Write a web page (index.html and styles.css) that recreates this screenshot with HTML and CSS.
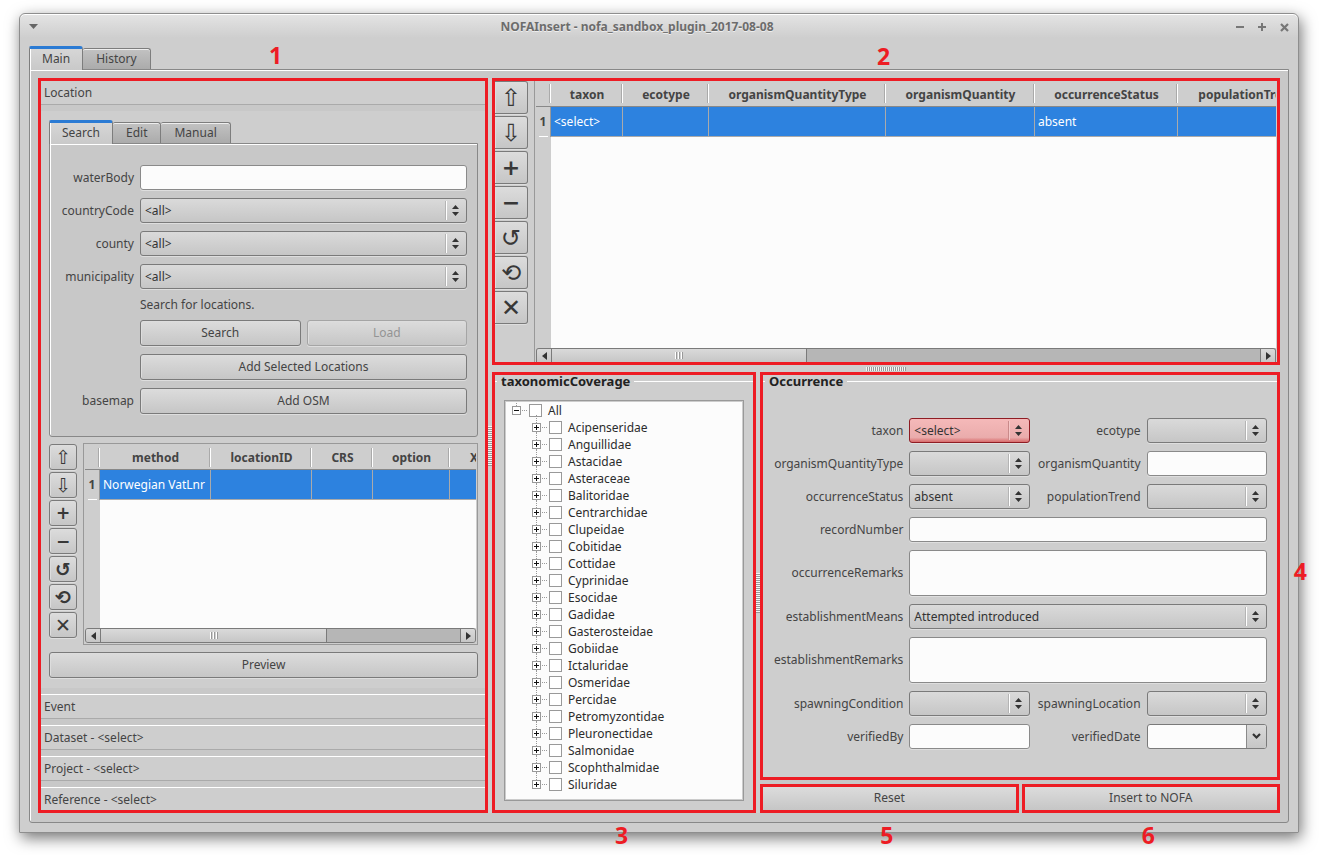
FILE: index.html
```html
<!DOCTYPE html>
<html lang="en">
<head>
<meta charset="utf-8">
<title>NOFAInsert - nofa_sandbox_plugin_2017-08-08</title>
<link rel="stylesheet" href="styles.css">
</head>
<body>
<svg class="defs" aria-hidden="true">
  <symbol id="updown" viewBox="0 0 7 11"><path d="M3.5 0 L7 4 H0 Z M0 7 H7 L3.5 11 Z" fill="#333"/></symbol>
  <symbol id="left" viewBox="0 0 5 8"><path d="M5 0 V8 L0 4 Z" fill="#333"/></symbol>
  <symbol id="right" viewBox="0 0 5 8"><path d="M0 0 V8 L5 4 Z" fill="#333"/></symbol>
</svg>
<main class="window">
  <header class="titlebar">
    <button class="wbtn" aria-label="Window menu"><svg width="9" height="6" viewBox="0 0 9 6"><path d="M0 0H9L4.500 5Z" fill="#666"/></svg></button>
    <h1>NOFAInsert - nofa_sandbox_plugin_2017-08-08</h1>
    <div class="wbtns">
      <button class="wbtn" aria-label="Minimize"><svg width="9" height="9" viewBox="0 0 9 9"><path d="M0 4H8" stroke="#777" stroke-width="2"/></svg></button>
      <button class="wbtn" aria-label="Maximize"><svg width="9" height="9" viewBox="0 0 9 9"><path d="M0 4H8M4 0V8" stroke="#777" stroke-width="2"/></svg></button>
      <button class="wbtn" aria-label="Close"><svg width="9" height="9" viewBox="0 0 9 9"><path d="M1 1L8 8M8 1L1 8" stroke="#777" stroke-width="2.200"/></svg></button>
    </div>
  </header>
  <nav class="tabs main-tabs">
    <button class="tab active">Main</button><button class="tab">History</button>
  </nav>
  <div class="page">
    <section class="mark location">
      <b class="num num1">1</b>
      <h2 class="fold first">Location</h2>
      <div class="fold-body">
        <nav class="tabs">
          <button class="tab active">Search</button><button class="tab">Edit</button><button class="tab">Manual</button>
        </nav>
        <form class="pane search-form">
          <label for="wb">waterBody</label><input id="wb" class="field" type="text">
          <label for="cc">countryCode</label><span class="combo"><select id="cc"><option>&lt;all&gt;</option></select><svg><use href="#updown"/></svg></span>
          <label for="co">county</label><span class="combo"><select id="co"><option>&lt;all&gt;</option></select><svg><use href="#updown"/></svg></span>
          <label for="mu">municipality</label><span class="combo"><select id="mu"><option>&lt;all&gt;</option></select><svg><use href="#updown"/></svg></span>
          <p class="second">Search for locations.</p>
          <div class="second pair"><button type="button" class="btn">Search</button><button type="button" class="btn" disabled>Load</button></div>
          <button type="button" class="btn second">Add Selected Locations</button>
          <label for="osm">basemap</label><button type="button" class="btn" id="osm">Add OSM</button>
        </form>
        <div class="grid-area">
          <div class="tools small">
            <button class="btn" aria-label="Move up">⇧</button>
            <button class="btn" aria-label="Move down">⇩</button>
            <button class="btn heavy sign" aria-label="Add">+</button>
            <button class="btn heavy sign" aria-label="Remove">−</button>
            <button class="btn heavy" aria-label="Reset row">↺</button>
            <button class="btn heavy" aria-label="Reset all rows">⟲</button>
            <button class="btn" aria-label="Delete all">✕</button>
          </div>
          <div class="frame">
            <div class="viewport">
              <table>
                <colgroup><col class="c15"><col class="c111"><col class="c101"><col class="c61"><col class="c77"><col class="c48"></colgroup>
                <thead><tr><th></th><th>method</th><th>locationID</th><th>CRS</th><th>option</th><th>X</th></tr></thead>
                <tbody><tr><th>1</th><td>Norwegian VatLnr</td><td></td><td></td><td></td><td></td></tr></tbody>
              </table>
            </div>
            <div class="scroll">
              <button aria-label="Scroll left"><svg><use href="#left"/></svg></button>
              <div class="trough"><div class="thumb" style="width:63%"><i></i></div></div>
              <button aria-label="Scroll right"><svg><use href="#right"/></svg></button>
            </div>
          </div>
        </div>
        <button class="btn preview">Preview</button>
      </div>
      <h2 class="fold">Event</h2>
      <h2 class="fold">Dataset - &lt;select&gt;</h2>
      <h2 class="fold">Project - &lt;select&gt;</h2>
      <h2 class="fold last">Reference - &lt;select&gt;</h2>
    </section>
    <div class="handle vertical"></div>
    <div class="right">
      <section class="mark occ-table">
        <b class="num num2">2</b>
        <div class="tools large">
          <button class="btn" aria-label="Move up">⇧</button>
          <button class="btn" aria-label="Move down">⇩</button>
          <button class="btn heavy sign" aria-label="Add">+</button>
          <button class="btn heavy sign" aria-label="Remove">−</button>
          <button class="btn" aria-label="Reset row">↺</button>
          <button class="btn" aria-label="Reset all rows">⟲</button>
          <button class="btn" aria-label="Delete all">✕</button>
        </div>
        <div class="frame">
          <div class="viewport">
            <table>
              <colgroup><col class="c15"><col class="c72"><col class="c86"><col class="c177"><col class="c149"><col class="c143"><col class="c140"></colgroup>
              <thead><tr><th></th><th>taxon</th><th>ecotype</th><th>organismQuantityType</th><th>organismQuantity</th><th>occurrenceStatus</th><th>populationTrend</th></tr></thead>
              <tbody><tr><th>1</th><td>&lt;select&gt;</td><td></td><td></td><td></td><td>absent</td><td></td></tr></tbody>
            </table>
          </div>
          <div class="scroll">
            <button aria-label="Scroll left"><svg><use href="#left"/></svg></button>
            <div class="trough"><div class="thumb" style="width:36%"><i></i></div></div>
            <button aria-label="Scroll right"><svg><use href="#right"/></svg></button>
          </div>
        </div>
      </section>
      <div class="handle horizontal"></div>
      <div class="bottom">
        <section class="mark coverage">
          <b class="num num3">3</b>
          <h2 class="group">taxonomicCoverage</h2>
          <div class="tree">
            <div class="node root"><button class="exp open" aria-label="Collapse"></button><label><input type="checkbox">All</label></div>
            <ul>
              <li class="node"><button class="exp" aria-label="Expand"></button><label><input type="checkbox">Acipenseridae</label></li>
              <li class="node"><button class="exp" aria-label="Expand"></button><label><input type="checkbox">Anguillidae</label></li>
              <li class="node"><button class="exp" aria-label="Expand"></button><label><input type="checkbox">Astacidae</label></li>
              <li class="node"><button class="exp" aria-label="Expand"></button><label><input type="checkbox">Asteraceae</label></li>
              <li class="node"><button class="exp" aria-label="Expand"></button><label><input type="checkbox">Balitoridae</label></li>
              <li class="node"><button class="exp" aria-label="Expand"></button><label><input type="checkbox">Centrarchidae</label></li>
              <li class="node"><button class="exp" aria-label="Expand"></button><label><input type="checkbox">Clupeidae</label></li>
              <li class="node"><button class="exp" aria-label="Expand"></button><label><input type="checkbox">Cobitidae</label></li>
              <li class="node"><button class="exp" aria-label="Expand"></button><label><input type="checkbox">Cottidae</label></li>
              <li class="node"><button class="exp" aria-label="Expand"></button><label><input type="checkbox">Cyprinidae</label></li>
              <li class="node"><button class="exp" aria-label="Expand"></button><label><input type="checkbox">Esocidae</label></li>
              <li class="node"><button class="exp" aria-label="Expand"></button><label><input type="checkbox">Gadidae</label></li>
              <li class="node"><button class="exp" aria-label="Expand"></button><label><input type="checkbox">Gasterosteidae</label></li>
              <li class="node"><button class="exp" aria-label="Expand"></button><label><input type="checkbox">Gobiidae</label></li>
              <li class="node"><button class="exp" aria-label="Expand"></button><label><input type="checkbox">Ictaluridae</label></li>
              <li class="node"><button class="exp" aria-label="Expand"></button><label><input type="checkbox">Osmeridae</label></li>
              <li class="node"><button class="exp" aria-label="Expand"></button><label><input type="checkbox">Percidae</label></li>
              <li class="node"><button class="exp" aria-label="Expand"></button><label><input type="checkbox">Petromyzontidae</label></li>
              <li class="node"><button class="exp" aria-label="Expand"></button><label><input type="checkbox">Pleuronectidae</label></li>
              <li class="node"><button class="exp" aria-label="Expand"></button><label><input type="checkbox">Salmonidae</label></li>
              <li class="node"><button class="exp" aria-label="Expand"></button><label><input type="checkbox">Scophthalmidae</label></li>
              <li class="node"><button class="exp" aria-label="Expand"></button><label><input type="checkbox">Siluridae</label></li>
            </ul>
          </div>
        </section>
        <div class="handle vertical"></div>
        <div class="occ-col">
          <section class="mark occurrence">
            <b class="num num4">4</b>
            <h2 class="group">Occurrence</h2>
            <form class="occ-form">
              <label for="f1">taxon</label><span class="combo error"><select id="f1"><option>&lt;select&gt;</option></select><svg><use href="#updown"/></svg></span>
              <label for="f2" class="l2">ecotype</label><span class="combo"><select id="f2"><option></option></select><svg><use href="#updown"/></svg></span>
              <label for="f3">organismQuantityType</label><span class="combo"><select id="f3"><option></option></select><svg><use href="#updown"/></svg></span>
              <label for="f4" class="l2">organismQuantity</label><input id="f4" class="field" type="text">
              <label for="f5">occurrenceStatus</label><span class="combo"><select id="f5"><option>absent</option></select><svg><use href="#updown"/></svg></span>
              <label for="f6" class="l2">populationTrend</label><span class="combo"><select id="f6"><option></option></select><svg><use href="#updown"/></svg></span>
              <label for="f7">recordNumber</label><input id="f7" class="field wide" type="text">
              <label for="f8">occurrenceRemarks</label><textarea id="f8" class="field wide"></textarea>
              <label for="f9">establishmentMeans</label><span class="combo wide"><select id="f9"><option>Attempted introduced</option></select><svg><use href="#updown"/></svg></span>
              <label for="f10">establishmentRemarks</label><textarea id="f10" class="field wide"></textarea>
              <label for="f11">spawningCondition</label><span class="combo"><select id="f11"><option></option></select><svg><use href="#updown"/></svg></span>
              <label for="f12" class="l2">spawningLocation</label><span class="combo"><select id="f12"><option></option></select><svg><use href="#updown"/></svg></span>
              <label for="f13">verifiedBy</label><input id="f13" class="field" type="text">
              <label for="f14" class="l2">verifiedDate</label><span class="date"><input id="f14" type="text"><button type="button" aria-label="Open calendar"><svg width="9" height="7" viewBox="0 0 9 7"><path d="M1 1L4.500 4.500L8 1" fill="none" stroke="#333" stroke-width="2.200"/></svg></button></span>
            </form>
          </section>
          <div class="actions">
            <div class="mark"><b class="num num5">5</b><button class="btn">Reset</button></div>
            <div class="mark"><b class="num num6">6</b><button class="btn">Insert to NOFA</button></div>
          </div>
        </div>
      </div>
    </div>
  </div>
</main>
</body>
</html>
```
FILE: styles.css
```css
* { box-sizing: border-box; }
body {
  margin: 0;
  min-height: 100vh;
  padding: 13px 20px 22px 19px;
  display: flex;
  background: #fff;
  color: #444;
  font: 12px/16px "Noto Sans", "Open Sans", sans-serif;
}
button, input, select, textarea { font: inherit; color: inherit; margin: 0; min-width: 0; }
h1, h2, p, ul { margin: 0; padding: 0; font-size: inherit; font-weight: normal; list-style: none; }
.defs { position: absolute; width: 0; height: 0; }

.window {
  flex: 1;
  min-width: 0;
  display: flex;
  flex-direction: column;
  padding: 0 9px 9px;
  background: linear-gradient(#e4e4e4, #cecece 24px);
  border: 1px solid #8e8e8e;
  border-radius: 6px 6px 0 0;
  box-shadow: inset 0 1px #fff, 2px 5px 15px rgba(0, 0, 0, .55);
}
.titlebar { display: flex; align-items: center; justify-content: space-between; height: 26px; }
.titlebar h1 { flex: 1; text-align: center; font-weight: bold; color: #6c6c6c; text-shadow: 0 1px #eee; }
.wbtn { display: flex; padding: 0; border: 0; background: none; }
.wbtns { display: flex; gap: 13px; }

.tabs { display: flex; align-items: flex-end; height: 23px; }
.main-tabs { margin-top: 6px; }
.tab {
  height: 21px;
  padding: 0 13px;
  border: 1px solid #7d7d7d;
  border-width: 1px 1px 0 0;
  border-radius: 2px 3px 0 0;
  background: linear-gradient(#c2c2c2, #ababab);
  box-shadow: inset 0 1px #eee;
}
.tab.active {
  position: relative;
  height: 24px;
  margin-bottom: -1px;
  padding: 0 12px 2px;
  border-width: 3px 1px 0;
  border-top-color: #2b7bd4;
  background: linear-gradient(#d6d6d6, #c9c9c9);
  box-shadow: inset 1px 0 #fff;
}

.page {
  flex: 1;
  display: grid;
  grid-template-columns: minmax(0, 450fr) 4px minmax(0, 788fr);
  padding: 8px 8px 9px;
  background: #c8c8c8;
  border: 1px solid #888;
  border-radius: 0 0 3px 3px;
  box-shadow: inset 1px 1px #fff;
}
.mark { position: relative; border: 3px solid #ed1c24; background: #cecece; }
.num { position: absolute; font-size: 23px; line-height: 24px; color: #ed1c24; }
.num1 { left: 228px; top: -38px; }
.num2 { left: calc(50% - 9px); top: -37px; }
.num3 { left: calc(50% - 9px); bottom: -37px; }
.num4 { right: -30px; top: 184px; }
.num5, .num6 { left: calc(50% - 9px); bottom: -37px; }

.location { display: flex; flex-direction: column; background: #c8c8c8; }
.fold { height: 25px; margin-top: 6px; padding: 3px 3px 0; line-height: 17px; background: #cecece; border-top: 1px solid #fff; border-bottom: 1px solid #aaa; }
.fold.first { height: 24px; margin: 0 0 6px; border-top: 0; }
.fold.last { height: 23px; border-bottom: 0; }
.fold-body { flex: 1; display: flex; flex-direction: column; padding: 9px 7px 10px 8px; background: #cecece; }

.pane { background: #c8c8c8; border: 1px solid #888; border-radius: 0 0 3px 3px; box-shadow: inset 1px 1px #fff; }
.search-form { display: grid; grid-template-columns: 84px 1fr; gap: 8px 6px; padding: 21px 10px 22px 0; align-items: center; }
.search-form label, .occ-form label { text-align: right; }
.second { grid-column: 2; }
.search-form p { line-height: 15px; }
.pair { display: grid; grid-template-columns: 1fr 1fr; gap: 6px; }

.btn {
  height: 26px;
  padding: 0;
  border: 1px solid #7a7a7a;
  border-radius: 3px;
  background: linear-gradient(#dcdcdc, #c6c6c6);
  box-shadow: 0 1px #dedede, inset 1px 1px #ddd;
}
.btn:disabled { color: #949494; border-color: #a5a5a5; }
.field {
  width: 100%;
  height: 25px;
  padding: 0 4px;
  background: #fcfcfc;
  border: 1px solid #8a8a8a;
  border-radius: 3px;
  box-shadow: 0 1px #dedede;
}
textarea.field { height: 46px; resize: none; display: block; }
.combo { position: relative; display: flex; min-width: 0; }
.combo select {
  appearance: none;
  width: 100%;
  height: 25px;
  padding: 0 24px 0 4px;
  color: #333;
  border: 1px solid #7a7a7a;
  border-radius: 3px;
  background: linear-gradient(#fff, #fff) right 19px center / 1px 19px no-repeat,
    linear-gradient(#b4b4b4, #b4b4b4) right 20px center / 1px 19px no-repeat,
    linear-gradient(#dadada, #c6c6c6);
  box-shadow: 0 1px #dedede;
}
.combo svg { position: absolute; right: 8px; top: 7px; width: 7px; height: 11px; pointer-events: none; }
.combo.error select {
  border-color: #8f1d24;
  background: linear-gradient(#f6c8c8, #f6c8c8) right 19px center / 1px 19px no-repeat,
    linear-gradient(#c98a8a, #c98a8a) right 20px center / 1px 19px no-repeat,
    linear-gradient(#f5b9b9, #eaacac 80%, #d86b6b);
}

.grid-area { flex: 1; display: flex; gap: 6px; margin: 6px 0 7px; min-height: 0; }
.tools { display: flex; flex-direction: column; gap: 2px; font-family: "DejaVu Sans", sans-serif; color: #383838; }
.tools .btn { line-height: 1; overflow: hidden; }
.small { padding-top: 1px; }
.small .btn { width: 28px; height: 26px; font-size: 19px; }
.small .sign { font-size: 17px; }
.large .btn { width: 33px; height: 33px; font-size: 24px; border-left: 0; border-radius: 0 3px 3px 0; }
.large .sign { font-size: 22px; }
.heavy { font-weight: bold; }

.frame { flex: 1; min-width: 0; display: flex; flex-direction: column; padding: 1px; border: 1px solid #999; background: #cecece; }
.viewport { flex: 1; overflow: hidden; background: linear-gradient(to right, #cecece 15px, #fcfcfc 15px); }
table { table-layout: fixed; width: 0; border-collapse: separate; border-spacing: 0; }
.c15 { width: 15px; } .c48 { width: 48px; } .c61 { width: 61px; } .c72 { width: 72px; } .c77 { width: 77px; }
.c86 { width: 86px; } .c101 { width: 101px; } .c111 { width: 111px; } .c140 { width: 140px; }
.c143 { width: 143px; } .c149 { width: 149px; } .c177 { width: 177px; }
th, td { padding: 0; white-space: nowrap; overflow: hidden; }
thead th {
  height: 25px;
  padding-top: 2px;
  border-bottom: 1px solid #888;
  background: linear-gradient(to right, #aaa 1px, #fff 1px) right center / 2px 19px no-repeat #cecece;
}
tbody th { background: linear-gradient(#fff, #fff) center bottom / 9px 1px no-repeat #cecece; border-right: 1px solid #999; }
td { height: 30px; padding-left: 3px; color: #fff; background: #2d82df; border: 1px solid #aaa; border-width: 0 1px 1px 0; }

.scroll { display: flex; height: 15px; border: 1px solid #7a7a7a; border-radius: 3px; background: #b6b6b6; overflow: hidden; }
.scroll button { width: 14px; padding: 0; border: 0; display: flex; align-items: center; justify-content: center; background: linear-gradient(#dadada, #c6c6c6); }
.scroll button svg { width: 5px; height: 8px; }
.trough { flex: 1; border: 1px solid #7a7a7a; border-width: 0 1px; }
.thumb { height: 100%; display: flex; align-items: center; justify-content: center; border-right: 1px solid #7a7a7a; background: linear-gradient(#dadada, #c6c6c6); }
.thumb i { width: 8px; height: 7px; background: repeating-linear-gradient(to right, #fff 0 1px, #999 1px 2px, #d0d0d0 2px 3px); }

.right { display: grid; grid-template-columns: minmax(0, 1fr); grid-template-rows: minmax(0, 287fr) 7px minmax(0, 441fr); }
.occ-table { display: flex; gap: 6px; }
.occ-table .frame { border-width: 0 0 0 1px; padding: 0 1px; }
.occ-table .scroll { height: 14px; border-bottom: 0; border-radius: 3px 3px 0 0; }
.occ-table thead th { height: 26px; }
.handle { display: flex; background: #cecece; }
.handle::before { content: ""; }
.vertical { align-items: center; }
.vertical::before { width: 4px; height: 40px; background: repeating-linear-gradient(#f4f4f4 0 1px, #999 1px 2px); }
.horizontal { align-items: center; justify-content: center; }
.horizontal::before { width: 40px; height: 4px; background: repeating-linear-gradient(to right, #f4f4f4 0 1px, #999 1px 2px); }
.bottom { display: grid; grid-template-columns: minmax(0, 264fr) 4px minmax(0, 520fr); }

.coverage { display: flex; flex-direction: column; }
.group { display: flex; align-items: center; gap: 4px; height: 12px; font-size: 13px; line-height: 12px; font-weight: bold; color: #222; }
.group::before { content: ""; width: 2px; height: 1px; background: #fff; }
.group::after { content: ""; flex: 1; height: 1px; background: #fff; }
.tree { flex: 1; margin: 13px 9px 9px; padding: 1px 7px; background: #fcfcfc; border: 1px solid #999; box-shadow: inset 0 0 0 1px #ccc; color: #2c2c2c; }
.node { display: flex; align-items: center; height: 17px; gap: 8px; }
.node label { display: flex; align-items: center; gap: 6px; line-height: 17px; }
.node input { appearance: none; width: 13px; height: 13px; border: 1px solid #999; background: #fff; }
.tree ul { padding-left: 20px; }
.exp {
  position: relative;
  width: 9px;
  height: 9px;
  padding: 0;
  border: 1px solid #999;
  background: linear-gradient(#111, #111) center / 5px 1px no-repeat, linear-gradient(#111, #111) center / 1px 5px no-repeat, #fff;
}
.exp.open { background: linear-gradient(#111, #111) center / 5px 1px no-repeat #fff; }
.exp::after { content: ""; position: absolute; left: 9px; top: 3px; width: 5px; border-top: 1px dotted #999; }
.exp::before { content: ""; position: absolute; left: 3px; top: -9px; height: 8px; border-left: 1px dotted #999; }
.exp.open::before { top: -4px; height: 3px; }

.occ-col { display: flex; flex-direction: column; gap: 4px; }
.occurrence { flex: 1; }
.occ-form { display: grid; grid-template-columns: auto 1fr auto 1fr; gap: 8px 6px; align-items: center; padding: 31px 10px 0 11px; }
.l2 { padding-left: 2px; }
.wide { grid-column: 2 / -1; }
.date { display: flex; height: 25px; border: 1px solid #7a7a7a; border-radius: 3px; background: #fcfcfc; overflow: hidden; }
.date input { flex: 1; width: 0; border: 0; padding: 0 4px; background: none; }
.date button { width: 20px; padding: 0; display: flex; align-items: center; justify-content: center; border: 0; border-left: 1px solid #8a8a8a; background: linear-gradient(#dadada, #c6c6c6); }
.actions { display: grid; grid-template-columns: 1fr 1fr; gap: 3px; }
.actions .btn { display: block; width: 100%; height: 23px; padding-bottom: 2px; border: 0; border-radius: 0; box-shadow: none; }
```
